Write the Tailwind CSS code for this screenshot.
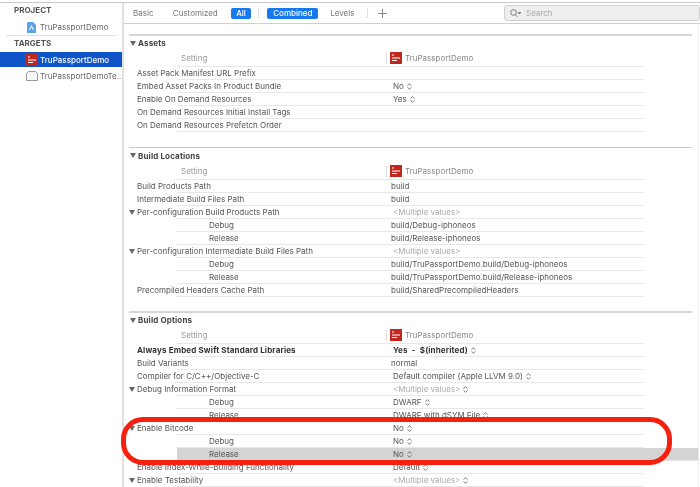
<!DOCTYPE html>
<html lang="en">
<head>
<meta charset="UTF-8">
<title>Build Settings</title>
<script src="https://cdn.jsdelivr.net/npm/@tailwindcss/browser@4"></script>
</head>
<body class="bg-white">
<div class="relative w-[700px] h-[487px] overflow-hidden bg-white font-['Inter',sans-serif] text-[8px] text-[#555] blur-[0.35px]">
  <div class="h-[2px] bg-white"></div>
  <div class="flex h-[485px] border-t border-[#c9c9c9]">

    <!-- Sidebar -->
    <aside class="w-[122px] shrink-0 pt-[2px]">
      <div class="h-[10px] pl-[14px] font-bold text-[#555] leading-[10px]">PROJECT</div>
      <div class="flex items-center h-[16px] mt-[4px] pl-[27px]">
        <svg class="w-[9px] h-[11px] shrink-0" viewBox="0 0 9 11"><path d="M1 0h5l3 3v8H0V1z" fill="#5aa2e8"/><path d="M4.500 3 7 8H6L4.500 5 3 8H2z" fill="#fff"/></svg>
        <span class="ml-[4px] text-[#666]">TruPassportDemo</span>
      </div>
      <div class="h-px mx-[6px] bg-[#e2e2e2]"></div>
      <div class="h-[10px] mt-[2px] pl-[14px] font-bold text-[#555] leading-[10px]">TARGETS</div>
      <div class="flex items-center h-[15px] mt-[4px] pl-[26px] bg-[#0f55c8] text-white font-medium">
        <svg class="w-[12px] h-[12px] shrink-0" viewBox="0 0 12 12"><rect width="12" height="12" fill="#c0281f"/><path d="M2 3h2M2 6h8M2 8.500h5" stroke="#fff"/></svg>
        <span class="ml-[2px]">TruPassportDemo</span>
      </div>
      <div class="flex items-center h-[16px] mt-[1px] pl-[26px]">
        <svg class="w-[12px] h-[10px] shrink-0" viewBox="0 0 12 10"><path d="M.5 9.500v-7l2-2h7l2 2v7z" fill="#f7f7f7" stroke="#999"/></svg>
        <span class="ml-[2px] text-[#666] whitespace-nowrap">TruPassportDemoTe...</span>
      </div>
    </aside>

    <main class="relative flex-1 border-l-2 border-[#e0e0e0] min-w-0">
      <!-- Tab bar -->
      <div class="flex items-center h-[21px] pl-[9px] border-b border-[#cfcfcf] text-[#777]">
        <span class="w-[40px]">Basic</span>
        <span class="w-[58px]">Customized</span>
        <span class="w-[21px] h-[11px] rounded-[2px] bg-[#1878f0] text-white font-medium text-center leading-[11px]">All</span>
        <span class="w-px h-[10px] ml-[7px] bg-[#e2e2e2]"></span>
        <span class="w-[51px] h-[11px] ml-[8px] rounded-[2px] bg-[#1878f0] text-white font-medium text-center leading-[11px]">Combined</span>
        <span class="w-[37px] ml-[12px]">Levels</span>
        <span class="w-px h-[10px] bg-[#e2e2e2]"></span>
        <svg class="w-[9px] h-[9px] ml-[10px] shrink-0" viewBox="0 0 9 9"><path d="M4.500 0v9M0 4.500h9" stroke="#888"/></svg>
        <div class="flex items-center w-[196px] h-[16px] ml-[117px] shrink-0 rounded-[3px] border border-[#cfcfcf] bg-[#eeeeee]">
          <svg class="w-[11px] h-[9px] ml-[5px]" viewBox="0 0 11 9"><circle cx="3.500" cy="3.500" r="2.800" fill="none" stroke="#777"/><path d="M5.500 5.500 7.500 8M8 3.500h3L9.500 5z" stroke="#777" fill="#777" stroke-width=".7"/></svg>
          <span class="ml-[5px] text-[#aaa]">Search</span>
        </div>
      </div>

      <!-- Sections -->
      <div class="w-[563px] ml-[5px]" id="sections"></div>
      <div class="absolute top-0 bottom-0 left-[574px] w-px bg-[#ececec]"></div>
    </main>
  </div>

  <!-- Red ring drawn over the screenshot -->
  <div class="absolute left-[121px] top-[417px] w-[551px] h-[48px] rounded-[22px] border-[5px] border-[#f5200e]"></div>
</div>

<script>
  const stepper = `<svg class="inline-block w-[5px] h-[7px] ml-[3px] align-[-1px]" viewBox="0 0 5 7"><path d="M.5 2.500 2.500 .8l2 1.700M.5 4.500l2 1.700 2-1.700" fill="none" stroke="#555" stroke-width=".8"/></svg>`;
  const appIcon = `<svg class="w-[12px] h-[12px] shrink-0" viewBox="0 0 12 12"><rect width="12" height="12" fill="#c0281f"/><path d="M2 3h2M2 6h8M2 8.500h5" stroke="#fff"/></svg>`;

  // name, value, kind: o = open triangle, c = child, b = bold; s = stepper, v = plain value, m = multiple values, h = selected
  const sections = [
    { title: 'Assets', bar: 'h-[2px] mt-[10px] bg-[#d6d6d6]', head: 'h-[16px]', rows: [
      ['Asset Pack Manifest URL Prefix', ''],
      ['Embed Asset Packs In Product Bundle', 'No', 's'],
      ['Enable On Demand Resources', 'Yes', 's'],
      ['On Demand Resources Initial Install Tags', ''],
      ['On Demand Resources Prefetch Order', ''],
    ]},
    { title: 'Build Locations', bar: 'h-px mt-[15px] bg-[#c8c8c8]', head: 'h-[17px]', rows: [
      ['Build Products Path', 'build', 'v'],
      ['Intermediate Build Files Path', 'build', 'v'],
      ['Per-configuration Build Products Path', '<Multiple values>', 'om'],
      ['Debug', 'build/Debug-iphoneos', 'cv'],
      ['Release', 'build/Release-iphoneos', 'cv'],
      ['Per-configuration Intermediate Build Files Path', '<Multiple values>', 'om'],
      ['Debug', 'build/TruPassportDemo.build/Debug-iphoneos', 'cv'],
      ['Release', 'build/TruPassportDemo.build/Release-iphoneos', 'cv'],
      ['Precompiled Headers Cache Path', 'build/SharedPrecompiledHeaders', 'v'],
    ]},
    { title: 'Build Options', bar: 'h-[2px] mt-[14px] bg-[#d6d6d6]', head: 'h-[16px]', rows: [
      ['Always Embed Swift Standard Libraries', 'Yes  -  $(inherited)', 'bs'],
      ['Build Variants', 'normal', 'v'],
      ['Compiler for C/C++/Objective-C', 'Default compiler (Apple LLVM 9.0)', 's'],
      ['Debug Information Format', '<Multiple values>', 'oms'],
      ['Debug', 'DWARF', 'cs'],
      ['Release', 'DWARF with dSYM File', 'cs'],
      ['Enable Bitcode', 'No', 'os'],
      ['Debug', 'No', 'cs'],
      ['Release', 'No', 'csh'],
      ['Enable Index-While-Building Functionality', 'Default', 's'],
      ['Enable Testability', '<Multiple values>', 'oms'],
    ]},
  ];

  const esc = s => s.replace(/</g, '&lt;').replace(/>/g, '&gt;');

  function renderRow([name, value, kind = '']) {
    const selected = kind.includes('h');
    return `
      <div class="flex items-center h-[13px] ml-[48px] border-b border-[#e8e8e8] ${selected ? 'w-[521px] bg-[#d4d4d4]' : 'w-[467px]'} ${kind.includes('b') ? 'font-bold text-[#333] tracking-[0.15px]' : ''}">
        <span class="-ml-[48px] w-[8px] shrink-0">${kind.includes('o') ? '<svg class="w-[6px] h-[5px]" viewBox="0 0 6 5"><path d="M0 0h6L3 5z" fill="#666"/></svg>' : ''}</span>
        <span class="w-[254px] shrink-0 whitespace-nowrap ${kind.includes('c') ? 'pl-[72px]' : ''}">${name}</span>
        <span class="whitespace-pre ${kind.includes('v') ? '' : 'pl-[2px]'} ${kind.includes('m') ? 'text-[#aaa]' : ''}">${esc(value)}${kind.includes('s') ? stepper : ''}</span>
      </div>`;
  }

  document.getElementById('sections').innerHTML = sections.map(sec => `
    <div class="${sec.bar}"></div>
    <div class="flex items-center ${sec.head} pb-[2px] font-bold text-[#444] tracking-[0.15px]">
      <svg class="w-[6px] h-[5px] ml-[1px] mr-[2px]" viewBox="0 0 6 5"><path d="M0 0h6L3 5z" fill="#666"/></svg>${sec.title}
    </div>
    <div class="flex items-center h-[15px] pb-[2px] ml-[48px] w-[467px] border-b border-[#e8e8e8]">
      <span class="w-[209px] shrink-0 pl-[4px] text-[#999]">Setting</span>
      <span class="w-px h-[11px] bg-[#ddd] mr-[3px]"></span>
      ${appIcon}
      <span class="ml-[3px] text-[#888]">TruPassportDemo</span>
    </div>
    ${sec.rows.map(renderRow).join('')}
  `).join('');
</script>
</body>
</html>
